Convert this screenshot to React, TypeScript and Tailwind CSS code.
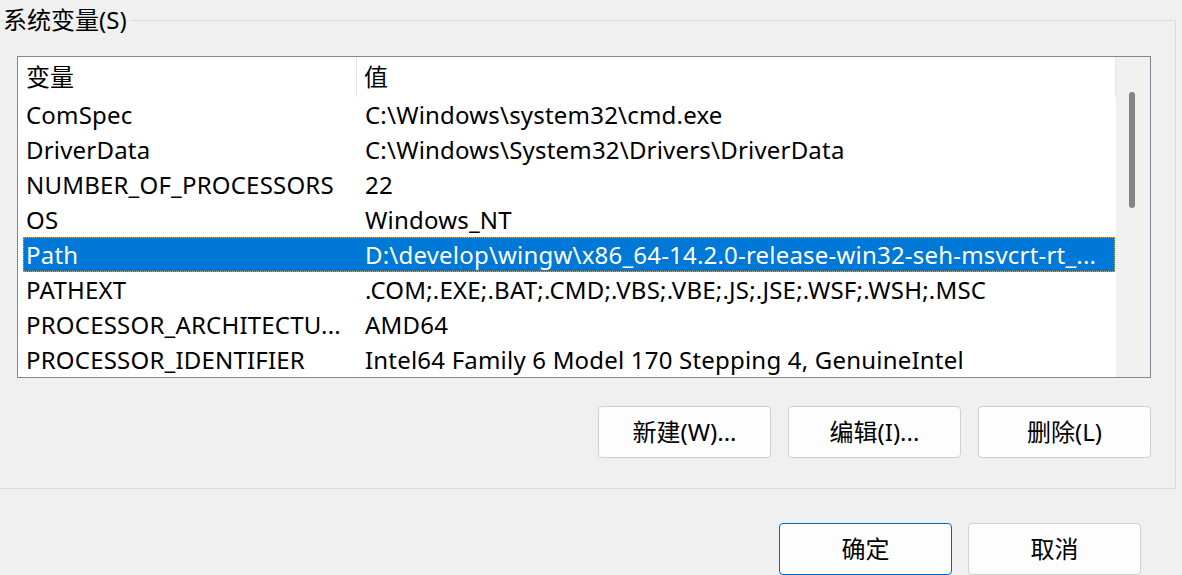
const rows = [
  { name: "ComSpec", value: "C:\\Windows\\system32\\cmd.exe" },
  { name: "DriverData", value: "C:\\Windows\\System32\\Drivers\\DriverData" },
  { name: "NUMBER_OF_PROCESSORS", value: "22" },
  { name: "OS", value: "Windows_NT" },
  {
    name: "Path",
    value: "D:\\develop\\wingw\\x86_64-14.2.0-release-win32-seh-msvcrt-rt_...",
    selected: true,
  },
  { name: "PATHEXT", value: ".COM;.EXE;.BAT;.CMD;.VBS;.VBE;.JS;.JSE;.WSF;.WSH;.MSC" },
  { name: "PROCESSOR_ARCHITECTU...", value: "AMD64" },
  { name: "PROCESSOR_IDENTIFIER", value: "Intel64 Family 6 Model 170 Stepping 4, GenuineIntel" },
];

function WinButton({ label, primary }: { label: string; primary?: boolean }) {
  return (
    <button
      className={
        primary
          ? "h-[52px] w-[173px] rounded-[4px] border border-[#0067c0] bg-[#fdfdfd] text-[24px] text-black"
          : "h-[52px] w-[173px] rounded-[4px] border border-[#d0d0d0] bg-[#fdfdfd] text-[24px] text-black"
      }
    >
      {label}
    </button>
  );
}

export default function App() {
  return (
    <div
      className="h-[575px] w-[1182px] overflow-hidden bg-[#f0f0f0] text-black"
      style={{ fontFamily: '"Noto Sans", "Noto Sans CJK SC", sans-serif' }}
    >
      <fieldset className="-ml-[8px] mt-[5px] w-[1184px] border border-[#dcdcdc] px-0 pb-[30px]">
        <legend className="ml-[10px] pr-[3px] text-[24px] leading-[30px]">系统变量(S)</legend>

        <div className="ml-[24px] mt-[21px] flex h-[322px] w-[1134px] border border-[#828790] bg-white">
          <div className="flex min-w-0 flex-1 flex-col">
            <div className="flex h-[40px] items-center text-[24px]">
              <div className="flex h-full w-[339px] items-center border-r border-[#e5e5e5] pl-[8px]">变量</div>
              <div className="flex h-full flex-1 items-center border-r border-[#e5e5e5] pl-[7px]">值</div>
            </div>
            {rows.map((r) => (
              <div
                key={r.name}
                className={
                  r.selected
                    ? "ml-[5px] mr-[1px] flex h-[35px] items-center border border-dotted border-[#e8a33a] bg-[#0078d7] text-[24px] tracking-[0.2px] text-white"
                    : "ml-[5px] mr-[1px] flex h-[35px] items-center border border-transparent text-[24px] tracking-[0.2px]"
                }
              >
                <div className="w-[333px] shrink-0 truncate whitespace-nowrap pl-[2px] pr-[2px]">{r.name}</div>
                <div className="min-w-0 flex-1 truncate whitespace-nowrap pl-[8px] pr-[4px]">{r.value}</div>
              </div>
            ))}
          </div>
          <div className="w-[34px] bg-[#f0f0f0] pt-[35px]">
            <div className="ml-[13px] h-[116px] w-[6px] rounded-full bg-[#858585]" />
          </div>
        </div>

        <div className="ml-[24px] mt-[28px] flex w-[1134px] justify-end gap-[17px]">
          <WinButton label="新建(W)..." />
          <WinButton label="编辑(I)..." />
          <WinButton label="删除(L)" />
        </div>
      </fieldset>

      <div className="mt-[34px] flex w-[1141px] justify-end gap-[16px]">
        <WinButton label="确定" primary />
        <WinButton label="取消" />
      </div>
    </div>
  );
}
